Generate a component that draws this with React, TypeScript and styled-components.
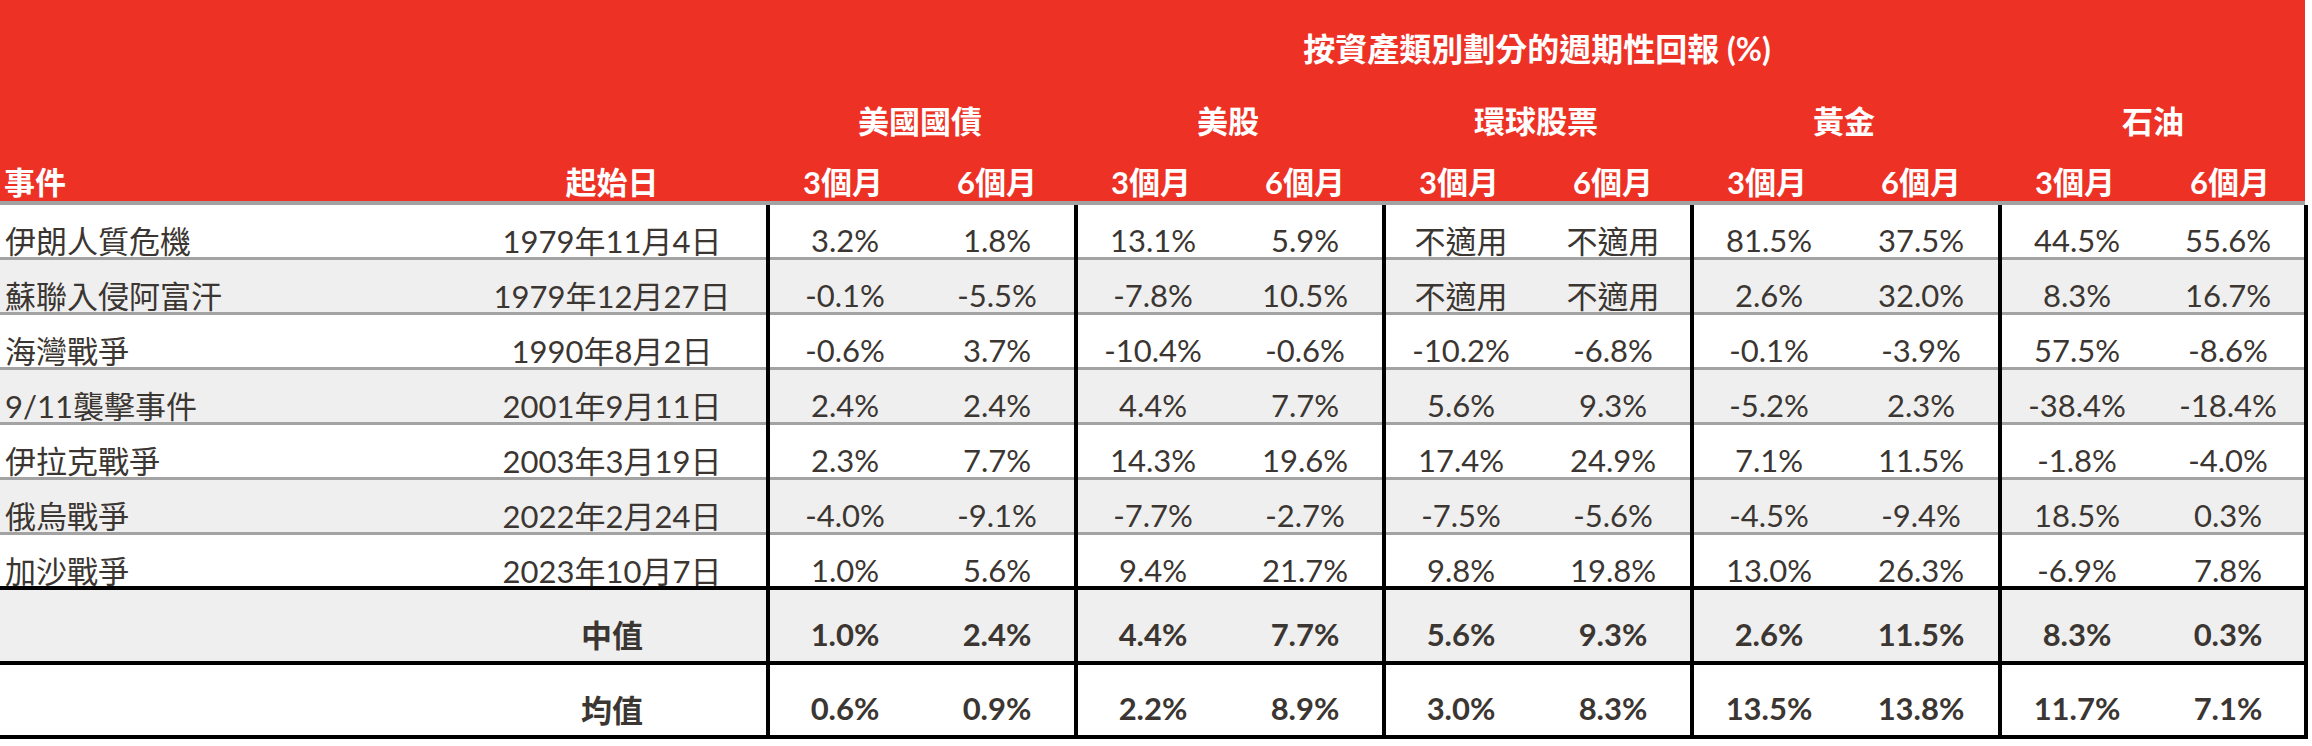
import styled, { createGlobalStyle } from "styled-components";

const GlobalStyle = createGlobalStyle`
  html, body {
    margin: 0;
    padding: 0;
    background: #ffffff;
  }
  body {
    font-family: "Lato", "Noto Sans CJK TC", sans-serif;
  }
`;

const COLS = "458px 308px repeat(9, 154px) 156px";
const RED = "#ee3125";
const INK = "#3b3632";

type EventRow = { name: string; date: string; values: string[] };

const events: EventRow[] = [
  { name: "伊朗人質危機", date: "1979年11月4日", values: ["3.2%", "1.8%", "13.1%", "5.9%", "不適用", "不適用", "81.5%", "37.5%", "44.5%", "55.6%"] },
  { name: "蘇聯入侵阿富汗", date: "1979年12月27日", values: ["-0.1%", "-5.5%", "-7.8%", "10.5%", "不適用", "不適用", "2.6%", "32.0%", "8.3%", "16.7%"] },
  { name: "海灣戰爭", date: "1990年8月2日", values: ["-0.6%", "3.7%", "-10.4%", "-0.6%", "-10.2%", "-6.8%", "-0.1%", "-3.9%", "57.5%", "-8.6%"] },
  { name: "9/11襲擊事件", date: "2001年9月11日", values: ["2.4%", "2.4%", "4.4%", "7.7%", "5.6%", "9.3%", "-5.2%", "2.3%", "-38.4%", "-18.4%"] },
  { name: "伊拉克戰爭", date: "2003年3月19日", values: ["2.3%", "7.7%", "14.3%", "19.6%", "17.4%", "24.9%", "7.1%", "11.5%", "-1.8%", "-4.0%"] },
  { name: "俄烏戰爭", date: "2022年2月24日", values: ["-4.0%", "-9.1%", "-7.7%", "-2.7%", "-7.5%", "-5.6%", "-4.5%", "-9.4%", "18.5%", "0.3%"] },
  { name: "加沙戰爭", date: "2023年10月7日", values: ["1.0%", "5.6%", "9.4%", "21.7%", "9.8%", "19.8%", "13.0%", "26.3%", "-6.9%", "7.8%"] },
];

const summary = [
  { label: "中值", values: ["1.0%", "2.4%", "4.4%", "7.7%", "5.6%", "9.3%", "2.6%", "11.5%", "8.3%", "0.3%"] },
  { label: "均值", values: ["0.6%", "0.9%", "2.2%", "8.9%", "3.0%", "8.3%", "13.5%", "13.8%", "11.7%", "7.1%"] },
];

const assets = ["美國國債", "美股", "環球股票", "黃金", "石油"];

const Table = styled.div`
  width: 2308px;
  color: ${INK};
`;

const Header = styled.div`
  display: grid;
  grid-template-columns: ${COLS};
  grid-template-rows: 92px 54px 55px;
  background: ${RED};
  color: #ffffff;
  font-weight: 700;
  font-size: 31px;
  border-bottom: 4px solid #a3a3a3;
  margin-right: 3px;
`;

const Title = styled.div`
  grid-column: 3 / 13;
  grid-row: 1;
  display: flex;
  align-items: center;
  justify-content: center;
  font-size: 32px;
  padding-top: 2px;
`;

const AssetName = styled.div<{ $col: number }>`
  grid-column: ${(p) => p.$col} / span 2;
  grid-row: 2;
  display: flex;
  align-items: center;
  justify-content: center;
`;

const HeadCell = styled.div<{ $left?: boolean }>`
  grid-row: 3;
  display: flex;
  align-items: center;
  justify-content: ${(p) => (p.$left ? "flex-start" : "center")};
  padding-left: ${(p) => (p.$left ? "4px" : "0")};
  padding-top: 18px;
  line-height: 1;
`;

const Row = styled.div<{ $shade: boolean; $height: number; $line: "grey" | "black" }>`
  display: grid;
  grid-template-columns: ${COLS};
  height: ${(p) => p.$height}px;
  background: ${(p) => (p.$shade ? "#efefef" : "#ffffff")};
  border-bottom: ${(p) => (p.$line === "grey" ? "3px solid #a3a3a3" : "4px solid #000000")};
  box-sizing: content-box;
`;

const Cell = styled.div<{ $align?: "left" | "center"; $bold?: boolean; $groupStart?: boolean; $end?: boolean; $shift: number }>`
  display: flex;
  align-items: center;
  justify-content: ${(p) => (p.$align === "left" ? "flex-start" : "center")};
  padding-left: ${(p) => (p.$align === "left" ? "5px" : "0")};
  padding-top: ${(p) => p.$shift}px;
  box-sizing: border-box;
  font-size: 31px;
  font-weight: ${(p) => (p.$bold ? 700 : 400)};
  white-space: nowrap;
  border-left: ${(p) => (p.$groupStart ? "4px solid #000" : "none")};
  border-right: ${(p) => (p.$end ? "4px solid #000" : "none")};
`;

const ValueCells = ({ values, bold, shift }: { values: string[]; bold?: boolean; shift: number }) => (
  <>
    {values.map((v, i) => (
      <Cell key={i} $bold={bold} $groupStart={i % 2 === 0} $end={i === values.length - 1} $shift={shift}>
        {v}
      </Cell>
    ))}
  </>
);

export default function App() {
  return (
    <>
      <GlobalStyle />
      <Table>
        <Header>
          <Title>按資產類別劃分的週期性回報 (%)</Title>
          {assets.map((a, i) => (
            <AssetName key={a} $col={3 + i * 2}>
              {a}
            </AssetName>
          ))}
          <HeadCell $left>事件</HeadCell>
          <HeadCell>起始日</HeadCell>
          {assets.flatMap((a) => [
            <HeadCell key={a + "3"}>3個月</HeadCell>,
            <HeadCell key={a + "6"}>6個月</HeadCell>,
          ])}
        </Header>

        {events.map((e, i) => (
          <Row key={e.name} $shade={i % 2 === 1} $height={i === events.length - 1 ? 51 : 52} $line={i === events.length - 1 ? "black" : "grey"}>
            <Cell $align="left" $shift={12}>{e.name}</Cell>
            <Cell $shift={12}>{e.date}</Cell>
            <ValueCells values={e.values} shift={12} />
          </Row>
        ))}

        {summary.map((s, i) => (
          <Row key={s.label} $shade={i === 0} $height={i === 0 ? 71 : 70} $line="black">
            <Cell $align="left" $shift={16} />
            <Cell $bold $shift={16}>{s.label}</Cell>
            <ValueCells values={s.values} bold shift={16} />
          </Row>
        ))}
      </Table>
    </>
  );
}
